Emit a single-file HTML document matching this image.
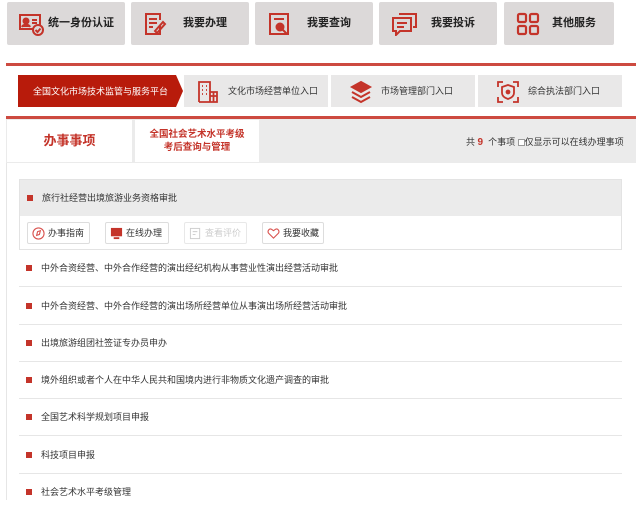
<!DOCTYPE html>
<html><head><meta charset="utf-8"><style>
*{margin:0;padding:0;box-sizing:border-box}
body{width:636px;height:500px;overflow:hidden;background:#fff;font-family:"Liberation Sans","Noto Sans CJK SC",sans-serif;position:relative;color:#333}
.a{position:absolute}
.tb{position:absolute;top:2px;height:43px;background:#dcd9d9;border-radius:2px;font-size:11px;font-weight:bold;color:#222;line-height:43px}
.tb svg{position:absolute;left:12px;top:10px}
.tab{position:absolute;top:75px;height:32px;background:#e9e8e8;font-size:9px;line-height:32px;color:#333}
.tab svg{position:absolute;top:5px}
.row{position:absolute;left:19px;width:603px;height:37px;border-bottom:1px solid #e6e6e6;font-size:9px;line-height:37px;padding-left:22px;color:#333}
.row i,.g i{position:absolute;left:7px;top:15px;width:6px;height:6px;background:#c4342a}
.btn{position:absolute;top:222px;height:22px;border:1px solid #ddd;border-radius:2px;font-size:9px;line-height:20px;padding-left:20px;color:#333}
.btn svg{position:absolute;left:4px;top:4px}
</style></head><body>
<div class="tb" style="left:7px;width:118px"><svg width="26" height="24" viewBox="0 0 26 24" fill="none" stroke="#c4342a" stroke-width="2"><rect x="1" y="3" width="20" height="14"/><circle cx="7" cy="9" r="2.5" fill="#c4342a"/><path d="M3 15c1-3 7-3 8 0" fill="#c4342a"/><path d="M13 8h5M13 11h5"/><circle cx="19" cy="18" r="5" fill="#dcd9d9"/><path d="M16.5 18l2 2 3-3.5"/></svg><span style="position:absolute;left:41px">统一身份认证</span></div>
<div class="tb" style="left:131px;width:118px"><svg width="24" height="24" viewBox="0 0 24 24" fill="none" stroke="#c4342a" stroke-width="2"><path d="M17 14v8H3V2h14v6"/><path d="M6 7h8M6 11h8M6 15h4"/><path d="M12 19l8-9 2 2-8 9z"/></svg><span style="position:absolute;left:52px">我要办理</span></div>
<div class="tb" style="left:255px;width:118px"><svg width="24" height="24" viewBox="0 0 24 24" fill="none" stroke="#c4342a" stroke-width="2"><rect x="3" y="2" width="18" height="20"/><path d="M7 7h10"/><circle cx="13" cy="15" r="3.5" fill="#c4342a"/><path d="M15.5 17.5l4 4"/></svg><span style="position:absolute;left:52px">我要查询</span></div>
<div class="tb" style="left:379px;width:118px"><svg width="26" height="24" viewBox="0 0 26 24" fill="none" stroke="#c4342a" stroke-width="2"><path d="M8 2h17v13h-3"/><path d="M2 6h18v13H9l-4 4v-4H2z"/><path d="M6 11h10M6 15h7"/></svg><span style="position:absolute;left:52px">我要投诉</span></div>
<div class="tb" style="left:504px;width:110px"><svg width="24" height="24" viewBox="0 0 24 24" fill="none" stroke="#c4342a" stroke-width="2.2"><rect x="2" y="2" width="8" height="8" rx="1.5"/><rect x="14" y="2" width="8" height="8" rx="1.5"/><rect x="2" y="14" width="8" height="8" rx="1.5"/><rect x="14" y="14" width="8" height="8" rx="1.5"/></svg><span style="position:absolute;left:48px">其他服务</span></div>

<div class="a" style="left:6px;top:63px;width:630px;height:3px;background:#cd4a40"></div>
<svg class="a" style="left:18px;top:75px" width="166" height="32"><polygon points="0,0 158,0 165,16 158,32 0,32" fill="#b81b0b"/><text x="15" y="19.5" font-size="9" fill="#fff" font-family="Liberation Sans,Noto Sans CJK SC,sans-serif">全国文化市场技术监管与服务平台</text></svg>
<div class="tab" style="left:184px;width:144px"><svg style="left:12px" width="24" height="24" viewBox="0 0 24 24" fill="none" stroke="#c4342a" stroke-width="1.8"><path d="M3 22V2h11v20M14 12h7v10H3"/><path d="M6 6h1M10 6h1M6 10h1M10 10h1M6 14h1M10 14h1"/><path d="M14 16h7M17.5 12v10"/></svg><span style="position:absolute;left:44px">文化市场经营单位入口</span></div>
<div class="tab" style="left:331px;width:144px"><svg style="left:18px" width="24" height="24" viewBox="0 0 24 24" fill="none" stroke="#c4342a" stroke-width="2"><path d="M12 2l9 5-9 5-9-5z" fill="#c4342a"/><path d="M3 12l9 5 9-5M3 17l9 5 9-5"/></svg><span style="position:absolute;left:50px">市场管理部门入口</span></div>
<div class="tab" style="left:478px;width:144px"><svg style="left:18px" width="24" height="24" viewBox="0 0 24 24" fill="none" stroke="#c4342a" stroke-width="1.8"><path d="M2 7V2h5M17 2h5v5M22 17v5h-5M7 22H2v-5"/><path d="M12 5l6 2v6c0 3-3 5-6 6-3-1-6-3-6-6V7z"/><circle cx="12" cy="12" r="1.5" fill="#c4342a"/></svg><span style="position:absolute;left:50px">综合执法部门入口</span></div>

<div class="a" style="left:6px;top:116px;width:630px;height:3px;background:#cd4a40"></div>
<div class="a" style="left:6px;top:119px;width:630px;height:44px;background:#ebebeb"></div>
<div class="a" style="left:7px;top:120px;width:125px;height:42px;background:#fff;color:#c4342a;font-size:13px;font-weight:bold;text-align:center;line-height:42px">办事事项</div>
<div class="a" style="left:135px;top:120px;width:124px;height:42px;background:#fff;color:#c4342a;font-size:9.5px;font-weight:bold;text-align:center;line-height:13px;padding-top:8px">全国社会艺术水平考级<br>考后查询与管理</div>
<div class="a" style="left:466px;top:135px;font-size:9px;color:#333;white-space:nowrap">共 <b style="color:#c4342a;font-size:10px">9</b> &nbsp;个事项 <span style="display:inline-block;width:7px;height:7px;border:1px solid #999;background:#fff;vertical-align:-1px"></span>仅显示可以在线办理事项</div>
<div class="a" style="left:6px;top:163px;width:1px;height:337px;background:#e6e6e6"></div>

<div class="a" style="left:19px;top:179px;width:603px;height:71px;border:1px solid #e3e3e3"></div>
<div class="a g" style="left:20px;top:180px;width:601px;height:36px;background:#ebebeb;font-size:9px;line-height:36px;padding-left:22px;color:#333"><i style="top:15px"></i>旅行社经营出境旅游业务资格审批</div>
<div class="btn" style="left:27px;width:63px"><svg width="13" height="13" viewBox="0 0 14 14" fill="none" stroke="#d9534f" stroke-width="1.2"><circle cx="7" cy="7" r="6"/><path d="M5 9l1-4 3-1-1 4z"/></svg>办事指南</div>
<div class="btn" style="left:105px;width:64px"><svg width="13" height="13" viewBox="0 0 14 14"><rect x="1" y="1" width="12" height="9" fill="#c4342a"/><rect x="4" y="11" width="6" height="2" fill="#c4342a"/></svg>在线办理</div>
<div class="btn" style="left:184px;width:63px;color:#ccc;border-color:#e8e8e8"><svg width="13" height="13" viewBox="0 0 14 14" fill="none" stroke="#ccc"><rect x="1.5" y="1.5" width="10" height="11"/><path d="M4 5h5M4 8h3"/></svg>查看评价</div>
<div class="btn" style="left:262px;width:62px"><svg width="13" height="13" viewBox="0 0 14 14" fill="none" stroke="#d9534f" stroke-width="1.2"><path d="M7 12L2 7C0 5 2 1 5 2.5L7 4l2-1.5C12 1 14 5 12 7z"/></svg>我要收藏</div>

<div class="row" style="top:250px"><i></i>中外合资经营、中外合作经营的演出经纪机构从事营业性演出经营活动审批</div>
<div class="row" style="top:288px"><i></i>中外合资经营、中外合作经营的演出场所经营单位从事演出场所经营活动审批</div>
<div class="row" style="top:325px"><i></i>出境旅游组团社签证专办员申办</div>
<div class="row" style="top:362px"><i></i>境外组织或者个人在中华人民共和国境内进行非物质文化遗产调查的审批</div>
<div class="row" style="top:399px"><i></i>全国艺术科学规划项目申报</div>
<div class="row" style="top:437px"><i></i>科技项目申报</div>
<div class="row" style="top:474px;border:none"><i></i>社会艺术水平考级管理</div>
</body></html>
